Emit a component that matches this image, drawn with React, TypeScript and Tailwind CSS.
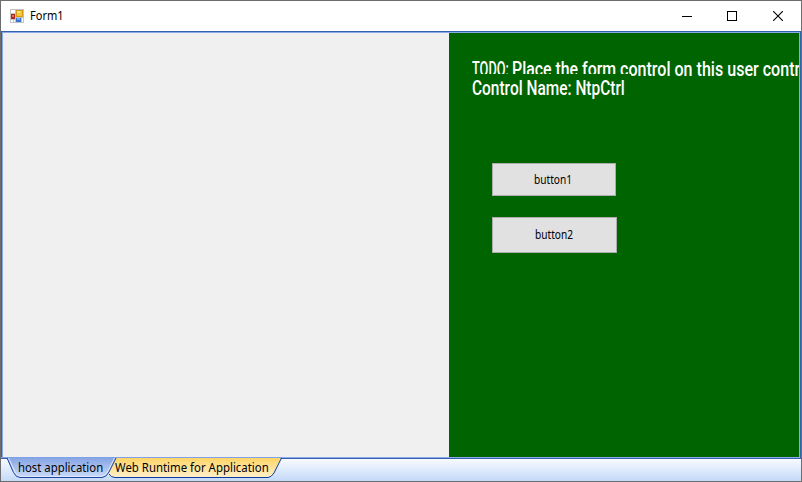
import { useLayoutEffect, useRef, useState } from "react";

type FitProps = { text: string; width: number; className?: string };

// A single line of text condensed or widened to an exact width.
function FitText({ text, width, className = "" }: FitProps) {
  const ref = useRef<HTMLSpanElement>(null);
  const [scale, setScale] = useState(1);
  useLayoutEffect(() => {
    if (ref.current) setScale(width / ref.current.offsetWidth);
  }, [text, width]);
  return (
    <span className={`block shrink-0 ${className}`} style={{ width }}>
      <span
        ref={ref}
        className="inline-block origin-left whitespace-pre"
        style={{ transform: `scaleX(${scale})` }}
      >
        {text}
      </span>
    </span>
  );
}

function FormIcon() {
  return (
    <svg width="14" height="14" viewBox="0 0 14 14" shapeRendering="crispEdges">
      <rect width="14" height="14" fill="#c3c3c3" />
      <rect x="1" y="1" width="4" height="3" fill="#fff" />
      <rect x="1" y="5" width="4" height="5" fill="#b3261c" />
      <rect x="2" y="6" width="2" height="2" fill="#e4705c" />
      <rect x="1" y="11" width="2" height="2" fill="#fff" />
      <rect x="4" y="11" width="1" height="2" fill="#fff" />
      <rect x="6" y="1" width="7" height="7" fill="#d69a14" />
      <rect x="7" y="2" width="5" height="5" fill="#f6c63e" />
      <rect x="7" y="2" width="3" height="2" fill="#ffe28a" />
      <rect x="6" y="9" width="5" height="4" fill="#3a72d0" />
      <rect x="7" y="9" width="3" height="2" fill="#77aaf5" />
      <rect x="12" y="9" width="1" height="4" fill="#fff" />
    </svg>
  );
}

function TitleBar() {
  return (
    <header className="flex h-[30px] shrink-0 items-center bg-white pl-[9px]">
      <FormIcon />
      <FitText text="Form1" width={34} className="ml-[6px] text-[12px] leading-[16px]" />
      <div className="ml-auto flex items-center">
        <div className="flex w-[45px] justify-center">
          <svg width="10" height="10" shapeRendering="crispEdges">
            <rect y="5" width="10" height="1" fill="#000" />
          </svg>
        </div>
        <div className="flex w-[46px] justify-center">
          <svg width="10" height="10" shapeRendering="crispEdges">
            <rect x="0.5" y="0.5" width="9" height="9" fill="none" stroke="#000" />
          </svg>
        </div>
        <div className="flex w-[46px] justify-center">
          <svg width="10" height="10">
            <path d="M0 0L10 10M10 0L0 10" stroke="#000" strokeWidth="1.1" />
          </svg>
        </div>
      </div>
    </header>
  );
}

function TabStrip() {
  return (
    <footer className="relative flex h-[22px] shrink-0 items-start bg-gradient-to-b from-[#f8fbff] to-[#c4daf8]">
      <svg className="absolute -top-[2px] left-0" width="290" height="22" viewBox="0 0 290 22">
        <defs>
          <linearGradient id="blueTab" x1="0" y1="0" x2="0" y2="1">
            <stop offset="0" stopColor="#87a5e5" />
            <stop offset="1" stopColor="#cbdbf8" />
          </linearGradient>
          <linearGradient id="goldTab" x1="0" y1="0" x2="0" y2="1">
            <stop offset="0" stopColor="#ffd566" />
            <stop offset="1" stopColor="#fff0cc" />
          </linearGradient>
        </defs>
        <path d="M105 1H280L273 16Q271 20.5 267 20.5H114Q110 20.5 108 16Z" fill="url(#goldTab)" />
        <path d="M280.5 1L273 16Q270 20.5 267 20.5H114Q110 20.5 108 17" fill="none" stroke="#0b3a9c" />
        <path d="M6 1H115L108 15Q105 20.5 101 20.5H19Q15 20.5 13 16Z" fill="url(#blueTab)" />
        <path d="M7.5 1L14 15Q16.5 19.5 20 19.5H100Q104 19.5 107 14L113.5 1" fill="none" stroke="#dfe9fb" />
        <path d="M6 1L12.5 15.5Q15 20.5 19 20.5H101Q105 20.5 108 15L115 1" fill="none" stroke="#1c459f" />
        <path d="M0 .5H281" stroke="#7da2e8" />
      </svg>
      <div className="relative flex pl-[17px] pt-px text-[12px] leading-[16px]">
        <FitText text="host application" width={85} />
        <FitText text="Web Runtime for Application" width={154} className="ml-[12px]" />
      </div>
    </footer>
  );
}

export default function App() {
  return (
    <div className="flex h-[482px] w-[802px] flex-col overflow-hidden border border-[#6d6d6d] bg-white font-['Noto_Sans',sans-serif] text-black">
      <TitleBar />
      <main className="flex h-[428px] shrink-0 border border-[#3560ae]">
        <div className="flex min-w-0 flex-1 border border-[#8aaae8]">
          <section className="w-[446px] shrink-0 bg-[#f0f0f0]" />
          <section className="flex min-w-0 flex-1 flex-col items-start overflow-hidden bg-[#006400] pl-[22px] pt-[25px] font-[Roboto,sans-serif] text-[20px] font-medium leading-[22px] text-white">
            <div className="flex h-[16px] pl-px">
              <FitText text="TODO:" width={37} />
              <FitText text="Place the form" width={104} className="ml-[3px]" />
              <FitText text="control on this user contr" width={180} className="ml-[4px]" />
            </div>
            <div className="relative flex h-[26px] w-[160px] bg-[#006400] pl-px pt-[3px]">
              <FitText text="Control Name: NtpCtrl" width={153} />
            </div>
            <button className="ml-[21px] mt-[63px] flex h-[33px] w-[124px] items-center justify-center border border-[#adadad] bg-[#e1e1e1] pr-[3px] font-['Noto_Sans',sans-serif] text-[12px] font-normal leading-[14px] text-black">
              <FitText text="button1" width={38} className="text-left" />
            </button>
            <button className="ml-[21px] mt-[21px] flex h-[36px] w-[125px] items-center justify-center border border-[#adadad] bg-[#e1e1e1] pr-[2px] font-['Noto_Sans',sans-serif] text-[12px] font-normal leading-[14px] text-black">
              <FitText text="button2" width={38} className="text-left" />
            </button>
          </section>
        </div>
      </main>
      <TabStrip />
    </div>
  );
}
